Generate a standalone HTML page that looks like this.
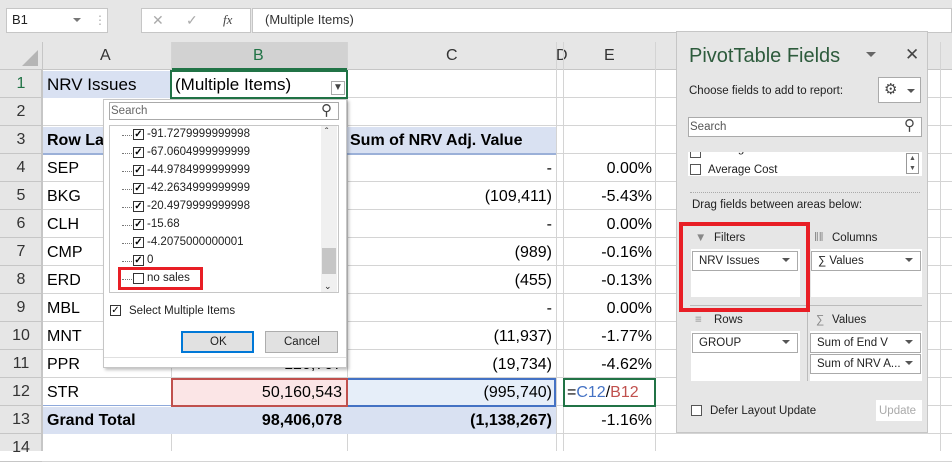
<!DOCTYPE html>
<html><head><meta charset="utf-8"><style>
*{box-sizing:border-box;margin:0;padding:0}
body{width:952px;height:451px;overflow:hidden;background:#fff;font-family:"Liberation Sans",sans-serif;position:relative}
.a{position:absolute}
.t{position:absolute;font-size:16px;line-height:28px;white-space:nowrap;color:#000}
.r{text-align:right}
.hl{position:absolute;height:1px;background:#d4d4d4}
.vl{position:absolute;width:1px;background:#d4d4d4}
.s{font-size:11.5px;color:#222}
.cb{position:absolute;width:11px;height:11px;border:1px solid #333;background:#fff;font-size:10px;line-height:9px;text-align:center;font-weight:bold}
</style></head><body>
<!-- top bar -->
<div class="a" style="left:0;top:0;width:952px;height:42px;background:#e6e6e6"></div>
<div class="a" style="left:6px;top:8px;width:102px;height:25px;background:#fff;border:1px solid #c6c6c6"></div>
<div class="t s" style="left:12px;top:6px;font-size:13px">B1</div>
<div class="a" style="left:73px;top:18px;border:4px solid transparent;border-top:4px solid #777"></div>
<div class="t" style="left:94px;top:6px;color:#aaa;font-size:12px">⋮</div>
<div class="a" style="left:141px;top:8px;width:51px;height:25px;background:#fff;border:1px solid #c6c6c6"></div>
<div class="a" style="left:141px;top:8px;width:110px;height:25px;background:#fff;border:1px solid #c6c6c6"></div>
<div class="t" style="left:152px;top:6px;color:#aaa;font-size:14px">✕</div>
<div class="t" style="left:186px;top:6px;color:#aaa;font-size:14px">✓</div>
<div class="t" style="left:223px;top:6px;color:#444;font-size:13px;font-style:italic;font-family:'Liberation Serif',serif">fx</div>
<div class="a" style="left:252px;top:8px;width:700px;height:25px;background:#fff;border:1px solid #c6c6c6"></div>
<div class="t" style="left:265px;top:6px;font-size:13px;color:#333">(Multiple Items)</div>
<!-- col headers -->
<div class="a" style="left:0;top:42px;width:952px;height:28px;background:#e6e6e6;border-bottom:1px solid #c6c6c6"></div>
<div class="a" style="left:171px;top:42px;width:176px;height:28px;background:#d2d2d2;border-bottom:2px solid #217346"></div>
<div class="a" style="left:22px;top:50px;width:0;height:0;border-left:16px solid transparent;border-bottom:16px solid #b5b5b5"></div>
<div class="t" style="left:100px;top:42px;color:#333">A</div>
<div class="t" style="left:253px;top:42px;color:#217346">B</div>
<div class="t" style="left:446px;top:42px;color:#333">C</div>
<div class="t" style="left:556px;top:42px;color:#333">D</div>
<div class="t" style="left:604px;top:42px;color:#333">E</div>
<!-- row headers -->
<div class="a" style="left:0;top:70px;width:42px;height:381px;background:#e6e6e6;border-right:1px solid #c6c6c6"></div>
<div id="rows"></div>
<!-- gridlines -->
<div class="vl" style="left:42px;top:42px;height:409px;background:#c6c6c6"></div>
<div class="vl" style="left:171px;top:42px;height:409px"></div>
<div class="vl" style="left:347px;top:42px;height:409px"></div>
<div class="vl" style="left:556px;top:42px;height:409px"></div>
<div class="vl" style="left:563px;top:42px;height:409px"></div>
<div class="vl" style="left:655px;top:42px;height:409px"></div>
<div class="vl" style="left:940px;top:42px;height:409px"></div>
<!-- highlighted fills -->
<div class="a" style="left:43px;top:71px;width:128px;height:27px;background:#d9e1f2"></div>
<div class="a" style="left:43px;top:127px;width:513px;height:27px;background:#d9e1f2"></div>
<div class="a" style="left:43px;top:407px;width:513px;height:27px;background:#d9e1f2"></div>
<div class="a" style="left:43px;top:153px;width:513px;height:2px;background:#9bb0d8"></div>
<div class="a" style="left:43px;top:405px;width:513px;height:1px;background:#8ea9db"></div>
<!-- B1 selection -->
<div class="a" style="left:170px;top:70px;width:178px;height:29px;border:2px solid #217346"></div>
<div class="a" style="left:331px;top:81px;width:14px;height:14px;background:#fff;border:1px solid #aaa;font-size:10px;text-align:center;line-height:12px;color:#444">▼</div>
<!-- B12/C12 refs -->
<div class="a" style="left:171px;top:378px;width:177px;height:29px;background:#fbe5e6;border:2px solid #c0504d"></div>
<div class="a" style="left:348px;top:378px;width:208px;height:29px;background:#e6eef9;border:2px solid #4472c4;border-left:none"></div>
<div class="a" style="left:563px;top:378px;width:93px;height:29px;border:2px solid #217346"></div>
<!-- text cells -->
<div class="t" style="left:47px;top:71px;font-size:17px">NRV Issues</div>
<div class="t" style="left:175px;top:71px;font-size:17px">(Multiple Items)</div>
<div class="t" style="left:47px;top:127px;font-weight:bold">Row La</div>
<div class="t" style="left:350px;top:127px;font-weight:bold">Sum of NRV Adj. Value</div>
<div class="t" style="left:47px;top:155px">SEP</div>
<div class="t" style="left:47px;top:183px">BKG</div>
<div class="t" style="left:47px;top:211px">CLH</div>
<div class="t" style="left:47px;top:239px">CMP</div>
<div class="t" style="left:47px;top:267px">ERD</div>
<div class="t" style="left:47px;top:295px">MBL</div>
<div class="t" style="left:47px;top:323px">MNT</div>
<div class="t" style="left:47px;top:351px">PPR</div>
<div class="t" style="left:47px;top:379px">STR</div>
<div class="t" style="left:47px;top:407px;font-weight:bold">Grand Total</div>
<div class="t r" style="left:350px;width:202px;top:155px">-</div>
<div class="t r" style="left:350px;width:202px;top:183px">(109,411)</div>
<div class="t r" style="left:350px;width:202px;top:211px">-</div>
<div class="t r" style="left:350px;width:202px;top:239px">(989)</div>
<div class="t r" style="left:350px;width:202px;top:267px">(455)</div>
<div class="t r" style="left:350px;width:202px;top:295px">-</div>
<div class="t r" style="left:350px;width:202px;top:323px">(11,937)</div>
<div class="t r" style="left:350px;width:202px;top:351px">(19,734)</div>
<div class="t r" style="left:350px;width:202px;top:379px">(995,740)</div>
<div class="t r" style="left:350px;width:202px;top:407px;font-weight:bold">(1,138,267)</div>
<div class="t r" style="left:174px;width:168px;top:351px">120,707</div>
<div class="t r" style="left:174px;width:168px;top:379px">50,160,543</div>
<div class="t r" style="left:174px;width:168px;top:407px;font-weight:bold">98,406,078</div>
<div class="t r" style="left:566px;width:86px;top:155px">0.00%</div>
<div class="t r" style="left:566px;width:86px;top:183px">-5.43%</div>
<div class="t r" style="left:566px;width:86px;top:211px">0.00%</div>
<div class="t r" style="left:566px;width:86px;top:239px">-0.16%</div>
<div class="t r" style="left:566px;width:86px;top:267px">-0.13%</div>
<div class="t r" style="left:566px;width:86px;top:295px">0.00%</div>
<div class="t r" style="left:566px;width:86px;top:323px">-1.77%</div>
<div class="t r" style="left:566px;width:86px;top:351px">-4.62%</div>
<div class="t" style="left:567px;top:379px">=<span style="color:#4472c4">C12</span>/<span style="color:#c0504d">B12</span></div>
<div class="t r" style="left:566px;width:86px;top:407px">-1.16%</div>
<!-- dropdown popup -->
<div class="a" style="left:103px;top:99px;width:244px;height:269px;background:#fff;border:1px solid #c6c6c6;box-shadow:2px 2px 3px rgba(0,0,0,.25)"></div>
<div class="a" style="left:109px;top:102px;width:230px;height:18px;border:1px solid #aaa"></div>
<div class="t s" style="left:111px;top:97px;line-height:28px;color:#666">Search</div>
<div class="t" style="left:321px;top:97px;font-size:15px;color:#444">⚲</div>
<div class="a" style="left:109px;top:125px;width:230px;height:168px;border:1px solid #c6c6c6"></div>
<div class="a" style="left:321px;top:126px;width:16px;height:166px;background:#f0f0f0"></div>
<div class="a" style="left:322px;top:248px;width:14px;height:26px;background:#c6c6c6"></div>
<div class="t s" style="left:325px;top:119px;font-size:10px">ˆ</div>
<div class="t s" style="left:324px;top:272px;font-size:9px">⌄</div>
<div id="items"></div>
<div class="a" style="left:118px;top:267px;width:85px;height:23px;border:3px solid #e81e25"></div>
<div class="cb" style="left:110px;top:305px;font-weight:normal">✓</div>
<div class="t s" style="left:129px;top:297px">Select Multiple Items</div>
<div class="a" style="left:181px;top:331px;width:73px;height:22px;background:#e1e1e1;border:2px solid #0078d7"></div>
<div class="t s" style="left:210px;top:328px">OK</div>
<div class="a" style="left:265px;top:331px;width:73px;height:22px;background:#e1e1e1;border:1px solid #adadad"></div>
<div class="t s" style="left:284px;top:328px">Cancel</div>
<div class="a" style="left:104px;top:357px;width:242px;height:1px;background:#e0e0e0"></div>
<!-- pivot panel -->
<div class="a" style="left:676px;top:31px;width:252px;height:402px;background:#e6e6e6;border:1px solid #c6c6c6"></div>
<div class="t" style="left:689px;top:42px;font-size:20px;color:#2d5b3c">PivotTable Fields</div>
<div class="a" style="left:866px;top:52px;border:5px solid transparent;border-top:5px solid #666"></div>
<div class="t" style="left:905px;top:41px;font-size:17px;color:#444">✕</div>
<div class="t s" style="left:689px;top:77px">Choose fields to add to report:</div>
<div class="a" style="left:878px;top:77px;width:43px;height:26px;background:#fff;border:1px solid #aaa"></div>
<div class="t" style="left:884px;top:76px;font-size:15px;color:#444">⚙</div>
<div class="a" style="left:907px;top:89px;border:4px solid transparent;border-top:4px solid #555"></div>
<div class="a" style="left:688px;top:117px;width:234px;height:20px;background:#fff;border:1px solid #aaa"></div>
<div class="t s" style="left:690px;top:113px;color:#555">Search</div>
<div class="t" style="left:904px;top:112px;font-size:15px;color:#444">⚲</div>
<div class="a" style="left:688px;top:152px;width:234px;height:24px;background:#fff;overflow:hidden">
 <div class="cb" style="left:2px;top:-5px;font-weight:normal;border-color:#555"></div>
 <div class="t s" style="left:20px;top:-13px;line-height:20px">Average Price</div>
 <div class="cb" style="left:2px;top:12px;border-color:#555"></div>
 <div class="t s" style="left:20px;top:8px;line-height:20px">Average Cost</div>
 <div class="a" style="left:218px;top:1px;width:13px;height:21px;border:1px solid #999;font-size:7px;line-height:10px;text-align:center;color:#555">▲<br>▼</div>
</div>
<div class="a" style="left:690px;top:192px;width:230px;border-top:1px dotted #aaa"></div>
<div class="t s" style="left:692px;top:191px">Drag fields between areas below:</div>
<div class="t s" style="left:695px;top:224px;color:#888">▼</div>
<div class="t s" style="left:714px;top:224px">Filters</div>
<div class="t s" style="left:814px;top:224px;color:#888">‖‖</div>
<div class="t s" style="left:832px;top:224px">Columns</div>
<div class="a" style="left:691px;top:249px;width:109px;height:48px;background:#fff"></div>
<div class="a" style="left:811px;top:249px;width:111px;height:48px;background:#fff"></div>
<div class="a" style="left:692px;top:251px;width:106px;height:20px;background:#fff;border:1px solid #aaa"></div>
<div class="t s" style="left:699px;top:247px">NRV Issues</div>
<div class="a" style="left:782px;top:258px;border:4px solid transparent;border-top:4px solid #555"></div>
<div class="a" style="left:811px;top:251px;width:110px;height:20px;background:#fff;border:1px solid #aaa"></div>
<div class="t s" style="left:818px;top:247px">∑ Values</div>
<div class="a" style="left:905px;top:258px;border:4px solid transparent;border-top:4px solid #555"></div>
<div class="a" style="left:690px;top:305px;width:232px;height:1px;background:#bbb"></div>
<div class="a" style="left:807px;top:306px;width:1px;height:75px;background:#bbb"></div>
<div class="t s" style="left:695px;top:306px;color:#888">≡</div>
<div class="t s" style="left:714px;top:306px">Rows</div>
<div class="t s" style="left:816px;top:306px;color:#888">∑</div>
<div class="t s" style="left:832px;top:306px">Values</div>
<div class="a" style="left:691px;top:331px;width:109px;height:50px;background:#fff"></div>
<div class="a" style="left:810px;top:331px;width:112px;height:50px;background:#fff"></div>
<div class="a" style="left:692px;top:333px;width:106px;height:20px;border:1px solid #aaa"></div>
<div class="t s" style="left:699px;top:329px">GROUP</div>
<div class="a" style="left:782px;top:340px;border:4px solid transparent;border-top:4px solid #555"></div>
<div class="a" style="left:810px;top:333px;width:111px;height:20px;border:1px solid #aaa"></div>
<div class="t s" style="left:817px;top:329px">Sum of End V</div>
<div class="a" style="left:905px;top:340px;border:4px solid transparent;border-top:4px solid #555"></div>
<div class="a" style="left:810px;top:354px;width:111px;height:20px;border:1px solid #aaa"></div>
<div class="t s" style="left:817px;top:350px">Sum of NRV A...</div>
<div class="a" style="left:905px;top:361px;border:4px solid transparent;border-top:4px solid #555"></div>
<div class="a" style="left:679px;top:222px;width:131px;height:90px;border:4px solid #e81e25"></div>
<div class="cb" style="left:691px;top:405px;border-color:#555"></div>
<div class="t s" style="left:710px;top:397px">Defer Layout Update</div>
<div class="a" style="left:876px;top:400px;width:46px;height:21px;background:#fff"></div>
<div class="t s" style="left:879px;top:397px;color:#aaa">Update</div>
<script>
var h='';for(var i=1;i<=14;i++){var y=70+28*(i-1);h+='<div class="hl" style="left:42px;top:'+(y+27)+'px;width:910px"></div><div class="hl" style="left:0;top:'+(y+27)+'px;width:42px;background:#c6c6c6"></div><div class="t" style="left:0;width:42px;text-align:center;top:'+y+'px;color:'+(i==1?'#217346':'#333')+'">'+i+'</div>';}
document.getElementById('rows').innerHTML=h;
var it=['-91.7279999999998','-67.0604999999999','-44.9784999999999','-42.2634999999999','-20.4979999999998','-15.68','-4.2075000000001','0','no sales'];h='';
for(var j=0;j<it.length;j++){var y=127+18*j;var last=j==8;h+='<div class="a" style="left:122px;top:'+(y+8)+'px;width:10px;border-top:1px dotted #777"></div><div class="cb" style="left:133px;top:'+(y+2)+'px">'+(last?'':'✓')+'</div><div class="t s" style="left:147px;top:'+(y-5)+'px;line-height:24px">'+it[j]+'</div>';}
document.getElementById('items').innerHTML=h;
</script>
</body></html>
